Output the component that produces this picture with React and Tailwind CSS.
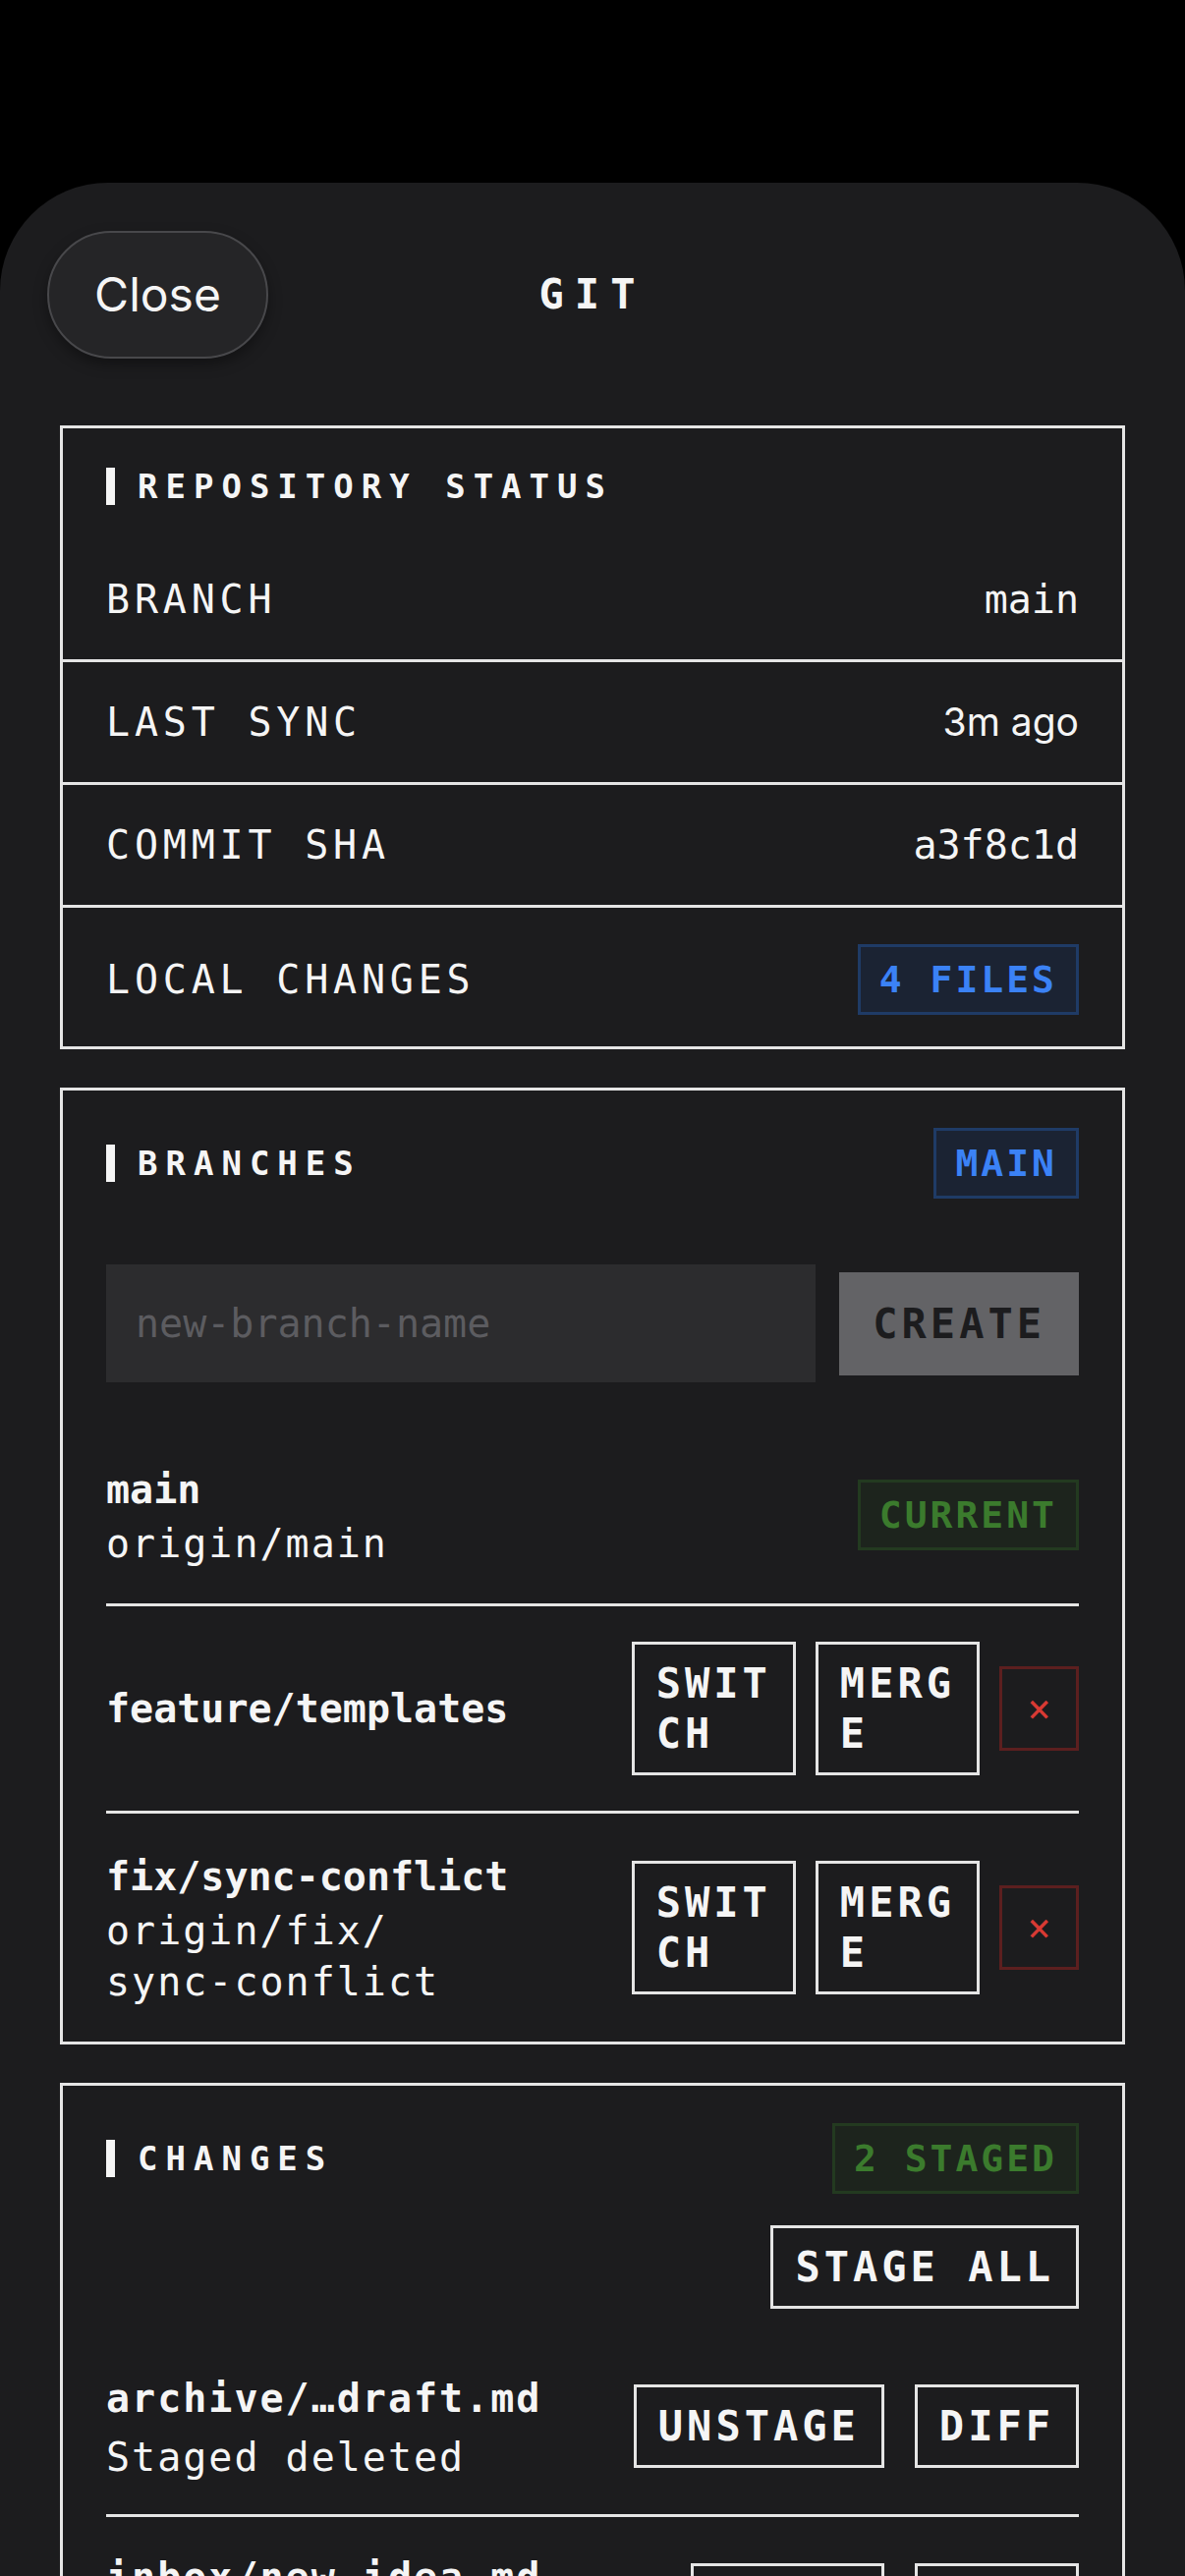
import React from "react";

const BORDER = "border-[#e5e5e5]";

function SectionTitle({ children }) {
  return (
    <div className="flex items-center gap-[23px] h-[38px]">
      <span className="block w-[9px] h-[38px] bg-[#f5f5f5]" />
      <span className="text-[34px] font-bold tracking-[8px] leading-[38px]">{children}</span>
    </div>
  );
}

function Badge({ tone, children }) {
  const tones = {
    blue: "border-[#1f3b66] bg-[#1b2333] text-[#3b82f6]",
    green: "border-[#233a20] bg-[#1d241d] text-[#3b7b2d]",
  };
  return (
    <span
      className={`inline-block border-[3px] px-[19px] py-[13px] text-[38px] font-bold tracking-[3px] leading-[40px] whitespace-nowrap ${tones[tone]}`}
    >
      {children}
    </span>
  );
}

function OutlineButton({ lines }) {
  return (
    <button
      type="button"
      className={`shrink-0 border-[3px] ${BORDER} bg-transparent px-[22px] py-[14px] text-left text-[42px] font-bold tracking-[4px] leading-[51px] text-[#f5f5f5] whitespace-nowrap`}
    >
      {lines.map((l) => (
        <span key={l} className="block">
          {l}
        </span>
      ))}
    </button>
  );
}

function DeleteButton() {
  return (
    <button
      type="button"
      className="shrink-0 flex items-center justify-center w-[81px] h-[86px] border-[3px] border-[#5c1f1f] text-[40px] leading-none text-[#d83a34]"
    >
      ×
    </button>
  );
}

function StatusRow({ label, value, first, last, sans }) {
  return (
    <div
      className={`flex items-center justify-between px-[44px] ${
        first ? "" : `border-t-[3px] ${BORDER}`
      } ${last ? "pt-[37px] pb-[32px]" : "py-[32px]"} leading-[58px]`}
    >
      <span className="text-[40px] tracking-[4.8px]">{label}</span>
      {typeof value === "string" ? (
        <span className={sans ? "font-['Inter',sans-serif] text-[39px]" : "text-[40px]"}>{value}</span>
      ) : (
        value
      )}
    </div>
  );
}

function BranchRow({ name, sub, current, first, padClass = "py-[35px]" }) {
  return (
    <div
      className={`flex items-center justify-between gap-[20px] ${padClass} ${
        first ? "" : `border-t-[3px] ${BORDER}`
      }`}
    >
      <div className="flex min-w-0 flex-col">
        <span className="text-[40px] font-bold leading-[58px]">{name}</span>
        {sub.map((s) => (
          <span key={s} className="text-[40px] tracking-[2px] leading-[52px]">
            {s}
          </span>
        ))}
      </div>
      {current ? (
        <Badge tone="green">CURRENT</Badge>
      ) : (
        <div className="flex shrink-0 items-center gap-[20px]">
          <OutlineButton lines={["SWIT", "CH"]} />
          <OutlineButton lines={["MERG", "E"]} />
          <DeleteButton />
        </div>
      )}
    </div>
  );
}

function FileRow({ name, status, action, first }) {
  return (
    <div
      className={`flex items-center justify-between gap-[20px] py-[32px] ${
        first ? "" : `border-t-[3px] ${BORDER}`
      }`}
    >
      <div className="flex min-w-0 flex-col">
        <span className="text-[40px] font-bold tracking-[2px] leading-[58px] whitespace-nowrap">{name}</span>
        <span className="mt-[5px] text-[40px] tracking-[2px] leading-[52px] whitespace-nowrap">{status}</span>
      </div>
      <div className="flex shrink-0 items-center gap-[31px]">
        <OutlineButton lines={[action]} />
        <OutlineButton lines={["DIFF"]} />
      </div>
    </div>
  );
}

export default function App() {
  return (
    <div className="h-[2622px] w-[1206px] overflow-hidden bg-black pt-[186px] font-['DejaVu_Sans_Mono',monospace] text-[#f5f5f5]">
      <div className="h-[2436px] rounded-t-[110px] bg-[#1c1c1e]">
        {/* sheet header */}
        <div className="grid grid-cols-[1fr_auto_1fr] items-center px-[48px] pt-[49px]">
          <div>
            <button
              type="button"
              className="flex h-[130px] w-[225px] items-center justify-center rounded-full border-2 border-[#48484b] bg-[#252527] font-['Inter',sans-serif] text-[48px] text-[#f5f5f5] shadow-[0_6px_14px_rgba(0,0,0,0.35)]"
            >
              Close
            </button>
          </div>
          <h1 className="text-[42px] font-bold tracking-[11px] leading-[50px]">GIT</h1>
          <div />
        </div>

        <div className="flex flex-col gap-[39px] px-[61px] pt-[68px]">
          {/* repository status */}
          <section className={`border-[3px] ${BORDER}`}>
            <div className="px-[44px] pt-[40px] pb-[35px]">
              <SectionTitle>REPOSITORY STATUS</SectionTitle>
            </div>
            <StatusRow first label="BRANCH" value="main" />
            <StatusRow label="LAST SYNC" value="3m ago" sans />
            <StatusRow label="COMMIT SHA" value="a3f8c1d" />
            <StatusRow last label="LOCAL CHANGES" value={<Badge tone="blue">4 FILES</Badge>} />
          </section>

          {/* branches */}
          <section className={`border-[3px] ${BORDER} px-[44px] pt-[38px]`}>
            <div className="flex h-[72px] items-center justify-between">
              <SectionTitle>BRANCHES</SectionTitle>
              <Badge tone="blue">MAIN</Badge>
            </div>
            <div className="mt-[67px] flex items-center gap-[24px]">
              <input
                type="text"
                placeholder="new-branch-name"
                className="h-[120px] min-w-0 flex-1 bg-[#2c2c2e] pl-[30px] font-['DejaVu_Sans_Mono',monospace] text-[40px] text-[#f5f5f5] outline-none placeholder:text-[#5c5c60]"
              />
              <button
                type="button"
                className="shrink-0 bg-[#636366] px-[34px] py-[27px] text-[42px] font-bold tracking-[4px] leading-[51px] text-[#1c1c1e]"
              >
                CREATE
              </button>
            </div>
            <div className="mt-[45px] flex flex-col">
              <BranchRow first name="main" sub={["origin/main"]} current />
              <BranchRow name="feature/templates" sub={[]} padClass="py-[36px]" />
              <BranchRow name="fix/sync-conflict" sub={["origin/fix/", "sync-conflict"]} />
            </div>
          </section>

          {/* working tree changes */}
          <section className={`border-[3px] ${BORDER} px-[44px] pt-[38px]`}>
            <div className="flex h-[72px] items-center justify-between">
              <SectionTitle>CHANGES</SectionTitle>
              <Badge tone="green">2 STAGED</Badge>
            </div>
            <div className="mt-[32px] flex justify-end">
              <OutlineButton lines={["STAGE ALL"]} />
            </div>
            <div className="mt-[30px] flex flex-col">
              <FileRow first name="archive/…draft.md" status="Staged deleted" action="UNSTAGE" />
              <FileRow name="inbox/new-idea.md" status="Untracked" action="STAGE" />
              <FileRow name="notes/today.md" status="Modified" action="STAGE" />
            </div>
          </section>
        </div>
      </div>
    </div>
  );
}
